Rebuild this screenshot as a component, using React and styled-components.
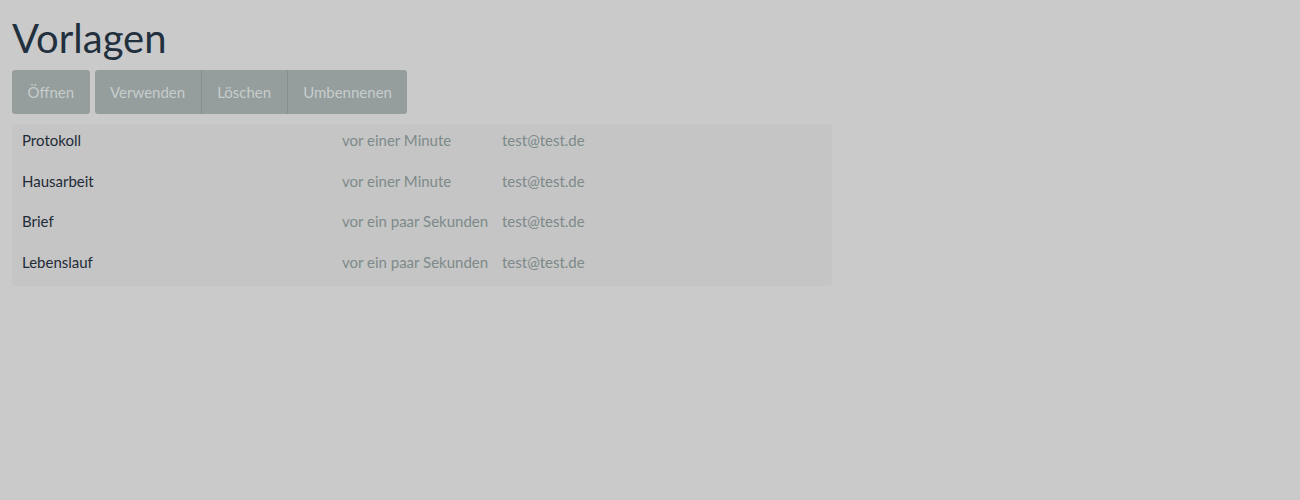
import React from 'react';
import styled, { createGlobalStyle } from 'styled-components';

const GlobalStyle = createGlobalStyle`
  html, body {
    margin: 0;
    padding: 0;
    background: #cacaca;
    font-family: Lato, "Open Sans", sans-serif;
  }
`;

const templates = [
  { name: 'Protokoll', time: 'vor einer Minute', owner: 'test@test.de' },
  { name: 'Hausarbeit', time: 'vor einer Minute', owner: 'test@test.de' },
  { name: 'Brief', time: 'vor ein paar Sekunden', owner: 'test@test.de' },
  { name: 'Lebenslauf', time: 'vor ein paar Sekunden', owner: 'test@test.de' },
];

const App = () => (
  <Page>
    <GlobalStyle />
    <Title>Vorlagen</Title>
    <Toolbar>
      <ButtonGroup>
        <Button>Öffnen</Button>
      </ButtonGroup>
      <ButtonGroup>
        <Button>Verwenden</Button>
        <Button>Löschen</Button>
        <Button>Umbennenen</Button>
      </ButtonGroup>
    </Toolbar>
    <Table>
      {templates.map((t) => (
        <Row key={t.name}>
          <NameCell>{t.name}</NameCell>
          <MetaCell>{t.time}</MetaCell>
          <MetaCell>{t.owner}</MetaCell>
        </Row>
      ))}
    </Table>
  </Page>
);

export default App;

const Page = styled.div`
  padding: 14px 12px;
`;

const Title = styled.h1`
  margin: 0 0 8px;
  font-size: 40px;
  font-weight: 400;
  line-height: 48px;
  color: #22303e;
`;

const Toolbar = styled.div`
  display: flex;
  gap: 5px;
  margin-bottom: 10px;
`;

const ButtonGroup = styled.div`
  display: flex;
  border-radius: 3px;
  overflow: hidden;
`;

const Button = styled.div`
  height: 44px;
  padding: 0 15.5px;
  display: flex;
  align-items: center;
  background: #959e9d;
  color: #c7cccc;
  font-size: 15px;

  & + & {
    border-left: 1px solid #869090;
  }
`;

const Table = styled.div`
  width: 820px;
  background: #c5c5c5;
  border-radius: 3px;
`;

const Row = styled.div`
  display: grid;
  grid-template-columns: 320px 160px 1fr;
  height: 40.5px;
  box-sizing: border-box;
  padding-top: 6px;
  align-items: start;
  font-size: 15px;
  line-height: 21px;
`;

const NameCell = styled.div`
  padding: 0 10px;
  color: #1f2b37;
`;

const MetaCell = styled.div`
  padding-left: 10px;
  white-space: nowrap;
  color: #7d8a8a;
`;
